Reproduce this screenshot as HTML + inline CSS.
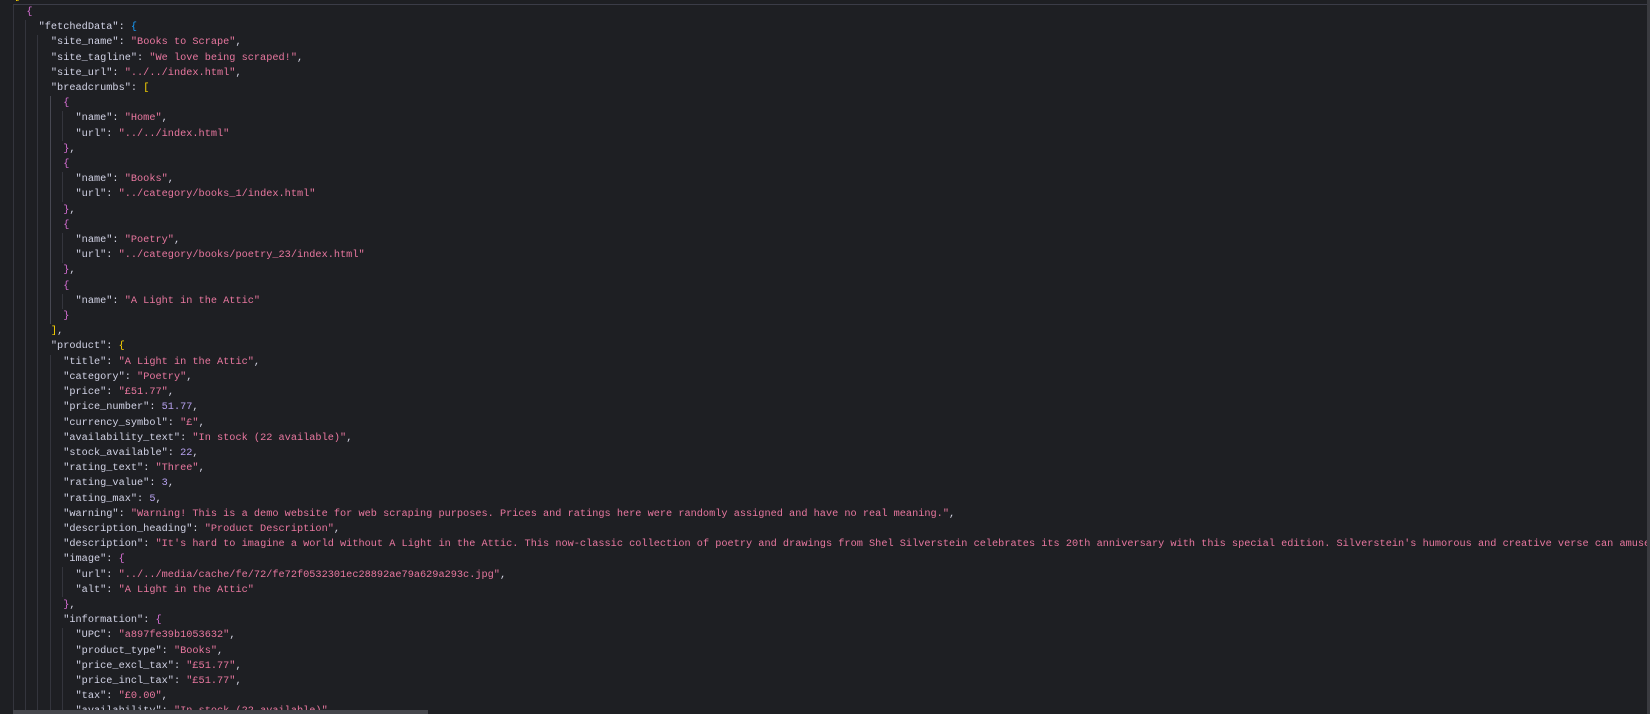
<!DOCTYPE html>
<html><head><meta charset="utf-8"><style>
html,body{margin:0;padding:0;background:#1e1f23;width:1650px;height:714px;overflow:hidden;position:relative}
pre{position:absolute;left:14px;top:-10.2px;margin:0;font-family:"Liberation Mono",monospace;font-size:10.25px;line-height:15.2px;color:#d4d4e4;white-space:pre}
.k{color:#d2d3e6}.s{color:#e8779f}.n{color:#b7a1ef}
.y{color:#ffd700}.p{color:#da70d6}.b{color:#179fff}
.g{position:absolute;width:1px;background:#34353d}
.top{position:absolute;left:13px;right:0;top:4px;height:1px;background:#3b3c47}
.sb{position:absolute;left:13px;width:415px;bottom:0;height:4px;background:#45464c}
.vs{position:absolute;right:0;top:0;width:3px;height:714px;background:#3a3b40}
</style></head><body>
<div class="top"></div>
<div class="g" style="left:13px;top:5px;height:709px"></div>
<div class="g" style="left:25px;top:20px;height:694px"></div>
<div class="g" style="left:37px;top:35px;height:679px"></div>
<div class="g" style="left:50px;top:96px;height:228px;background:#474852"></div>
<div class="g" style="left:50px;top:355px;height:359px"></div>
<div class="g" style="left:62px;top:111px;height:30px"></div>
<div class="g" style="left:62px;top:172px;height:30px"></div>
<div class="g" style="left:62px;top:233px;height:30px"></div>
<div class="g" style="left:62px;top:294px;height:15px"></div>
<div class="g" style="left:62px;top:567px;height:30px"></div>
<div class="g" style="left:62px;top:628px;height:86px"></div>
<pre><span class="y">[</span>
  <span class="p">{</span>
    <span class="k">"fetchedData"</span>: <span class="b">{</span>
      <span class="k">"site_name"</span>: <span class="s">"Books to Scrape"</span>,
      <span class="k">"site_tagline"</span>: <span class="s">"We love being scraped!"</span>,
      <span class="k">"site_url"</span>: <span class="s">"../../index.html"</span>,
      <span class="k">"breadcrumbs"</span>: <span class="y">[</span>
        <span class="p">{</span>
          <span class="k">"name"</span>: <span class="s">"Home"</span>,
          <span class="k">"url"</span>: <span class="s">"../../index.html"</span>
        <span class="p">}</span>,
        <span class="p">{</span>
          <span class="k">"name"</span>: <span class="s">"Books"</span>,
          <span class="k">"url"</span>: <span class="s">"../category/books_1/index.html"</span>
        <span class="p">}</span>,
        <span class="p">{</span>
          <span class="k">"name"</span>: <span class="s">"Poetry"</span>,
          <span class="k">"url"</span>: <span class="s">"../category/books/poetry_23/index.html"</span>
        <span class="p">}</span>,
        <span class="p">{</span>
          <span class="k">"name"</span>: <span class="s">"A Light in the Attic"</span>
        <span class="p">}</span>
      <span class="y">]</span>,
      <span class="k">"product"</span>: <span class="y">{</span>
        <span class="k">"title"</span>: <span class="s">"A Light in the Attic"</span>,
        <span class="k">"category"</span>: <span class="s">"Poetry"</span>,
        <span class="k">"price"</span>: <span class="s">"£51.77"</span>,
        <span class="k">"price_number"</span>: <span class="n">51.77</span>,
        <span class="k">"currency_symbol"</span>: <span class="s">"£"</span>,
        <span class="k">"availability_text"</span>: <span class="s">"In stock (22 available)"</span>,
        <span class="k">"stock_available"</span>: <span class="n">22</span>,
        <span class="k">"rating_text"</span>: <span class="s">"Three"</span>,
        <span class="k">"rating_value"</span>: <span class="n">3</span>,
        <span class="k">"rating_max"</span>: <span class="n">5</span>,
        <span class="k">"warning"</span>: <span class="s">"Warning! This is a demo website for web scraping purposes. Prices and ratings here were randomly assigned and have no real meaning."</span>,
        <span class="k">"description_heading"</span>: <span class="s">"Product Description"</span>,
        <span class="k">"description"</span>: <span class="s">"It's hard to imagine a world without A Light in the Attic. This now-classic collection of poetry and drawings from Shel Silverstein celebrates its 20th anniversary with this special edition. Silverstein's humorous and creative verse can amuse</span>
        <span class="k">"image"</span>: <span class="p">{</span>
          <span class="k">"url"</span>: <span class="s">"../../media/cache/fe/72/fe72f0532301ec28892ae79a629a293c.jpg"</span>,
          <span class="k">"alt"</span>: <span class="s">"A Light in the Attic"</span>
        <span class="p">}</span>,
        <span class="k">"information"</span>: <span class="p">{</span>
          <span class="k">"UPC"</span>: <span class="s">"a897fe39b1053632"</span>,
          <span class="k">"product_type"</span>: <span class="s">"Books"</span>,
          <span class="k">"price_excl_tax"</span>: <span class="s">"£51.77"</span>,
          <span class="k">"price_incl_tax"</span>: <span class="s">"£51.77"</span>,
          <span class="k">"tax"</span>: <span class="s">"£0.00"</span>,
          <span class="k">"availability"</span>: <span class="s">"In stock (22 available)"</span>,
</pre>
<div class="sb"></div>
<div class="vs"></div>
</body></html>
